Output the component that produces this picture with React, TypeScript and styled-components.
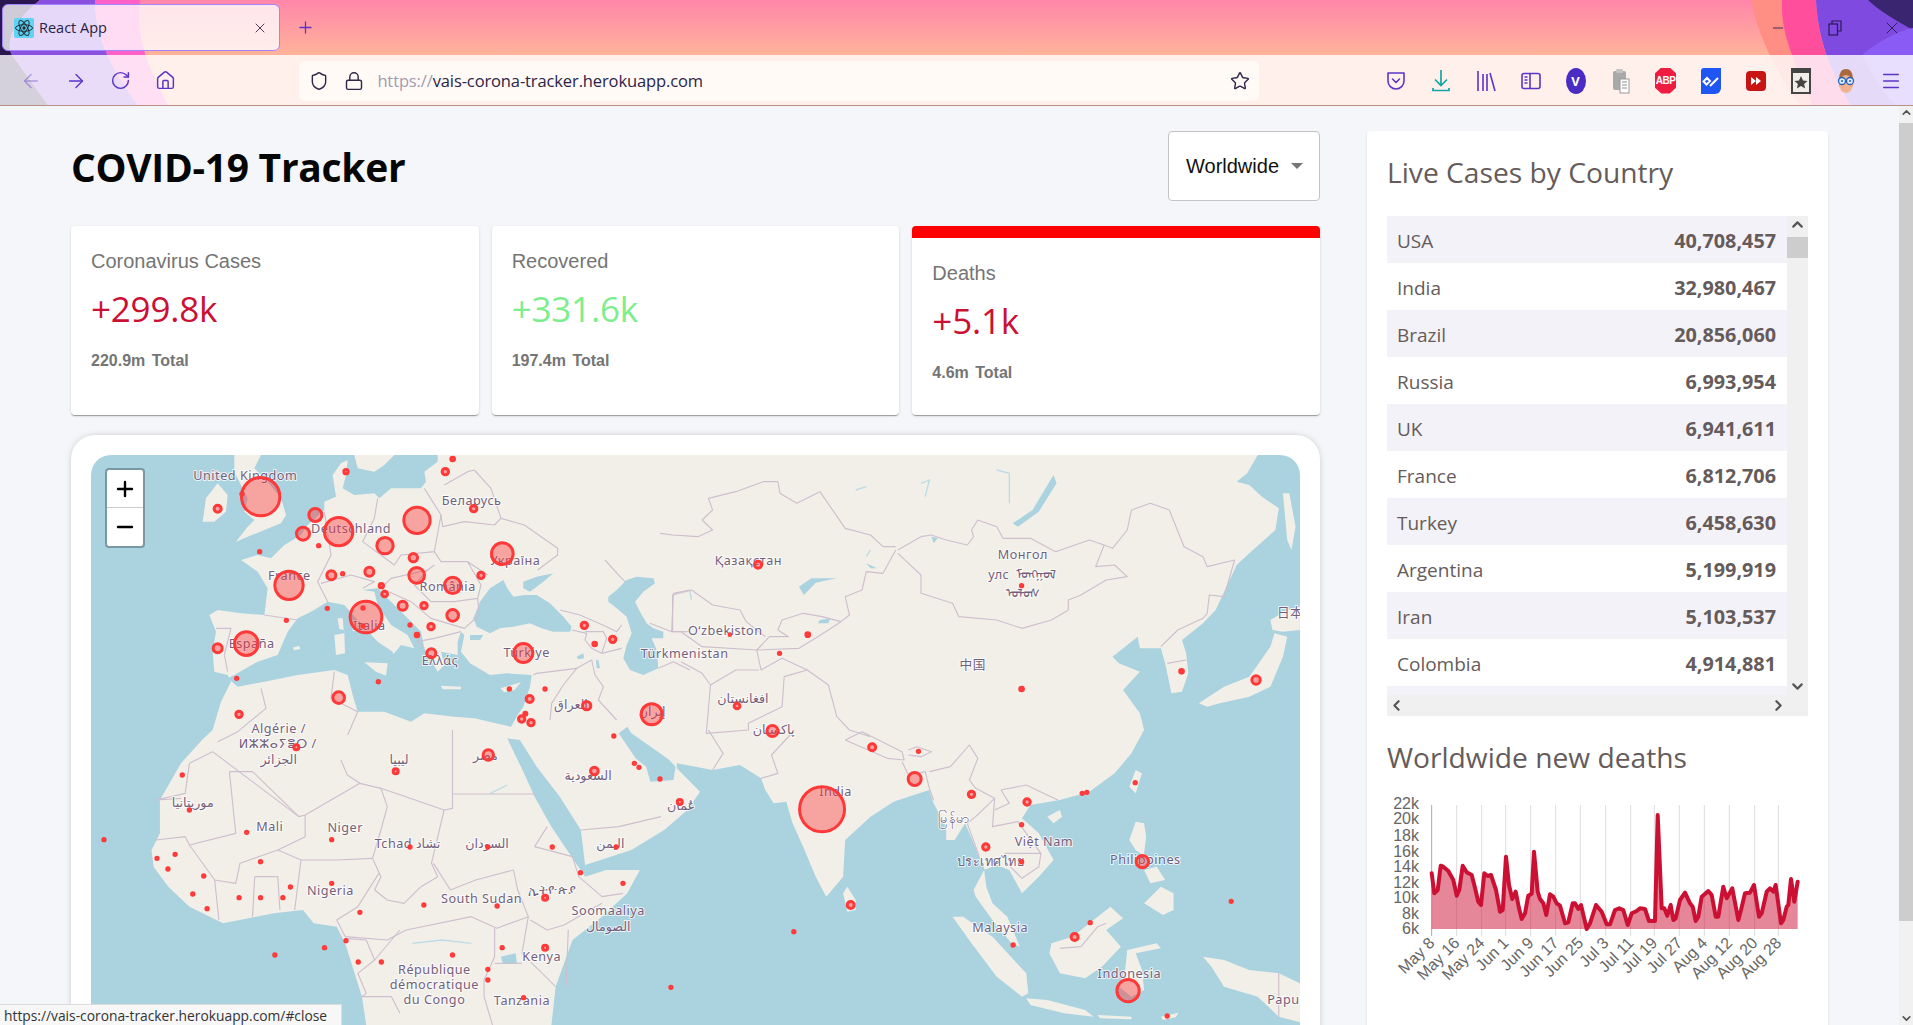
import React from "react";
import styled, { createGlobalStyle } from "styled-components";
import { ArrowLeft, ArrowRight, RotateCw, Home, Shield, Lock, Star, X, Plus, Minus, ChevronUp, ChevronDown, ChevronLeft, ChevronRight, Menu } from "lucide-react";

const Global = createGlobalStyle`
  html, body { margin: 0; padding: 0; height: 100%; overflow: hidden; background: #f5f6fa; }
  #root { height: 100%; }
  * { box-sizing: border-box; }
`;

const App_ = styled.div`
  position: relative;
  height: 100vh;
  display: flex;
  flex-direction: column;
  overflow: hidden;
  font-family: "Open Sans", "Liberation Sans", sans-serif;
`;

/* ---------- browser chrome ---------- */
const Chrome = styled.header`
  position: relative;
  flex: none;
  height: 106px;
  background: linear-gradient(#ff86aa 0, #ffb39a 55px, #ffb39a 100%);
`;
const Backdrop = styled.svg`
  position: absolute;
  inset: 0;
  width: 100%;
  height: 105px;
`;
const TabStrip = styled.div`
  position: relative;
  height: 55px;
  display: flex;
  align-items: center;
  padding-left: 2px;
`;
const Tab = styled.div`
  width: 278px;
  height: 47px;
  display: flex;
  align-items: center;
  padding: 0 11px;
  gap: 5px;
  border: 1px solid #a184ff;
  border-radius: 6px;
  background: rgba(255, 255, 255, 0.78);
  color: #2a2145;
  font-size: 14.5px;
`;
const TabTitle = styled.span`
  flex: 1;
`;
const NewTab = styled.div`
  margin-left: 16px;
  display: flex;
  color: #5b35c9;
`;
const WindowControls = styled.div`
  margin-left: auto;
  margin-right: -7px;
  display: flex;
  align-items: center;
  color: #2a1a55;
`;
const WinButton = styled.div`
  width: 57px;
  display: flex;
  justify-content: center;
`;
const Toolbar = styled.div`
  position: relative;
  height: 51px;
  display: flex;
  align-items: center;
  padding: 1px 0 0 9px;
  background: rgba(255, 255, 255, 0.8);
  border-bottom: 1px solid #b98f88;
`;
const NavButton = styled.div<{ $dim?: boolean }>`
  width: 44.6px;
  display: flex;
  justify-content: center;
  color: #5b35c9;
  opacity: ${(p) => (p.$dim ? 0.4 : 1)};
`;
const UrlBar = styled.div`
  margin-left: 112px;
  width: 960px;
  height: 40px;
  display: flex;
  align-items: center;
  padding: 0 9px 0 10px;
  gap: 15px;
  background: #fffaf6;
  border-radius: 6px;
  color: #2d2748;
`;
const UrlText = styled.div`
  flex: 1;
  margin-left: -2px;
  font-size: 16.5px;
  color: #2b2446;
  letter-spacing: -0.12px;
`;
const UrlScheme = styled.span`
  color: #a39cae;
`;
const ExtGroup = styled.div`
  margin-left: auto;
  display: flex;
  align-items: center;
`;
const ExtSlot = styled.div`
  width: 45px;
  height: 30px;
  display: flex;
  align-items: center;
  justify-content: center;
`;

/* ---------- page ---------- */
const Page = styled.main`
  flex: 1;
  min-height: 0;
  display: flex;
  background: #f5f6fa;
  overflow: hidden;
`;
const Content = styled.div`
  flex: 1;
  display: flex;
  align-items: flex-start;
  gap: 47px;
  padding: 25px 0 0 71px;
`;
const MainColumn = styled.div`
  width: 1249px;
  flex: none;
`;
const Header = styled.div`
  height: 70px;
  display: flex;
  align-items: center;
  justify-content: space-between;
  margin-bottom: 25px;
`;
const Title = styled.h1`
  margin: 1px 0 0;
  font-size: 39px;
  font-weight: 700;
  color: #060606;
  letter-spacing: -0.3px;
`;
const CountrySelect = styled.div`
  width: 152px;
  height: 70px;
  display: flex;
  align-items: center;
  padding-left: 17px;
  gap: 12px;
  background: #fff;
  border: 1px solid #c4c4c4;
  border-radius: 4px;
  font-family: "Liberation Sans", Arial, sans-serif;
  font-size: 20px;
  color: #111;
`;
const Caret = styled.span`
  width: 0;
  height: 0;
  border-left: 6px solid transparent;
  border-right: 6px solid transparent;
  border-top: 6px solid #757575;
`;
const StatsRow = styled.div`
  display: flex;
  gap: 13px;
  margin-bottom: 20px;
`;
const StatCard = styled.section<{ $active?: boolean }>`
  flex: 1;
  height: 189px;
  padding: 23px 20px 0;
  background: #fff;
  border-radius: 4px;
  border-top: ${(p) => (p.$active ? "12px solid #ff0000" : "0 solid transparent")};
  box-shadow: 0 2px 1px -1px rgba(0, 0, 0, 0.2), 0 1px 1px 0 rgba(0, 0, 0, 0.14), 0 1px 3px 0 rgba(0, 0, 0, 0.12);
`;
const StatTitle = styled.div`
  font-family: "Liberation Sans", Arial, sans-serif;
  font-size: 20px;
  line-height: 24px;
  color: #757575;
`;
const StatValue = styled.div<{ $green?: boolean }>`
  margin-top: 14px;
  font-size: 35px;
  font-weight: 500;
  line-height: 44px;
  color: ${(p) => (p.$green ? "#7dee8e" : "#cc1034")};
  letter-spacing: -0.2px;
`;
const StatTotal = styled.div`
  margin-top: 19px;
  font-family: "Liberation Sans", Arial, sans-serif;
  font-size: 16px;
  line-height: 22px;
  font-weight: 700;
  word-spacing: 2px;
  color: #757575;
`;
const MapCard = styled.section`
  padding: 20px;
  height: 640px;
  background: #fff;
  border-radius: 24px;
  box-shadow: 0 0 8px -4px rgba(0, 0, 0, 0.5);
`;
const MapFrame = styled.div`
  position: relative;
  height: 600px;
  border-radius: 20px;
  overflow: hidden;
  background: #aad3df;
`;
const MapSvg = styled.svg`
  display: block;
  width: 1209px;
  height: 600px;
`;
const Land = styled.polygon`
  fill: #f2efe9;
`;
const Water = styled.polygon`
  fill: #aad3df;
`;
const River = styled.polyline`
  fill: none;
  stroke: #bcdce5;
  stroke-width: 4;
`;
const Border = styled.polyline`
  fill: none;
  stroke: #cdbfcd;
  stroke-width: 3.4;
  stroke-linejoin: round;
`;
const Marker = styled.circle`
  fill: rgba(255, 51, 51, 0.4);
  stroke: #ff3838;
  stroke-width: 9;
`;
const MapLabel = styled.text`
  font-family: "Noto Sans", "DejaVu Sans", "Noto Sans CJK SC", sans-serif;
  font-size: 38px;
  letter-spacing: 1.5px;
  fill: #735f7c;
  stroke: rgba(255, 255, 255, 0.75);
  stroke-width: 6px;
  paint-order: stroke;
  text-anchor: middle;
`;
const ZoomControl = styled.div`
  position: absolute;
  left: 14px;
  top: 13px;
  width: 40px;
  border: 2px solid rgba(0, 0, 0, 0.28);
  border-radius: 4px;
  background: #fff;
  background-clip: padding-box;
  color: #000;
`;
const ZoomButton = styled.div<{ $top?: boolean }>`
  height: 38px;
  display: flex;
  align-items: center;
  justify-content: center;
  border-bottom: ${(p) => (p.$top ? "1px solid #ccc" : "0")};
`;

/* ---------- right panel ---------- */
const Sidebar = styled.aside`
  width: 461px;
  flex: none;
  min-height: 1000px;
  padding: 20px;
  background: #fff;
  border-radius: 4px;
  box-shadow: 0 1px 2px rgba(0, 0, 0, 0.15);
`;
const PanelTitle = styled.h3`
  margin: -1px 0 0;
  font-size: 28.2px;
  line-height: 44px;
  font-weight: 400;
  color: #655b5b;
`;
const TableBox = styled.div`
  margin-top: 22px;
  display: grid;
  grid-template-columns: 400px 21px;
  grid-template-rows: 479px 21px;
`;
const Rows = styled.div`
  overflow: hidden;
  color: #655b5b;
`;
const Row = styled.div<{ $odd: boolean; $sliver?: boolean }>`
  height: ${(p) => (p.$sliver ? "9px" : "47px")};
  display: flex;
  align-items: center;
  justify-content: space-between;
  padding: 2px 11px 0 10px;
  font-size: 19px;
  background: ${(p) => (p.$odd ? "#f3f2f8" : "#fff")};
`;
const RowValue = styled.strong`
  font-size: 19.8px;
  font-weight: 700;
`;
const VScroll = styled.div`
  display: flex;
  flex-direction: column;
  align-items: center;
  justify-content: space-between;
  background: #f0f0f0;
  color: #555;
  position: relative;
`;
const VThumb = styled.div`
  position: absolute;
  top: 21px;
  left: 0;
  width: 21px;
  height: 21px;
  background: #cdcdcd;
`;
const HScroll = styled.div`
  grid-column: 1 / 3;
  display: flex;
  align-items: center;
  justify-content: space-between;
  padding: 0 21px 0 1px;
  background: #f0f0f0;
  color: #555;
`;
const SecondTitle = styled(PanelTitle)`
  margin-top: 19px;
`;
const ChartSvg = styled.svg`
  display: block;
  margin: 11px 0 0;
  width: 421px;
  height: 210px;
`;
const AxisText = styled.text`
  font-family: "Liberation Sans", Arial, sans-serif;
  font-size: 16px;
  fill: #666;
`;
const PageScrollbar = styled.div`
  position: relative;
  flex: none;
  width: 14px;
  background: #f1f1f1;
  color: #555;
  display: flex;
  flex-direction: column;
  align-items: center;
  justify-content: space-between;
`;
const PageThumb = styled.div`
  position: absolute;
  top: 17px;
  left: 0;
  width: 14px;
  height: 798px;
  background: #cdcdcd;
`;
const StatusBar = styled.div`
  position: absolute;
  left: 0;
  bottom: 0;
  width: 342px;
  height: 21px;
  padding: 0 4px;
  font-size: 13.8px;
  line-height: 22px;
  white-space: nowrap;
  overflow: hidden;
  color: #333;
  background: #f7f7f7;
  border-top: 1px solid #ddd;
  border-right: 1px solid #ddd;
`;

/* ---------- map geometry: traced at 3x the map's pixels ---------- */
type P = number[];
const tr = (sx: number, ox: number, oy: number) => (p: P) => {
  const out: number[] = [];
  for (let i = 0; i < p.length; i += 2) out.push(ox + p[i] * sx, oy + p[i + 1]);
  return out;
};
const A = tr(1, 0, 0);
const Z6 = tr(1.148, -33, -45);
const Z7 = tr(1.2628, 1707, -45);
const Z8 = tr(1.2628, -273, 825);
const Z9 = tr(1.2628, 1707, 825);
const Z12 = tr(1, 1137, 315);
const pts = (p: P) => {
  const s: string[] = [];
  for (let i = 0; i < p.length; i += 2) s.push(`${p[i].toFixed(1)},${p[i + 1].toFixed(1)}`);
  return s.join(" ");
};

const outerLand = [
  ...A([1040, 0]),
  ...Z7([1420, 45, 1395, 100, 1370, 125, 1400, 135, 1430, 170, 1470, 205, 1462, 270, 1400, 340, 1370, 375, 1320, 510, 1290, 550, 1240, 600, 1250, 640, 1255, 700, 1240, 755, 1215, 760, 1200, 670, 1190, 625, 1140, 625, 1135, 590, 1095, 630, 1075, 650, 1090, 670, 1140, 695, 1100, 750, 1140, 820, 1150, 870]),
  ...Z9([1120, 70, 1080, 130, 1020, 185, 950, 210, 880, 225, 860, 265, 900, 310, 935, 390, 900, 440, 860, 490, 830, 420, 800, 405, 770, 420, 775, 470, 790, 520, 825, 560, 855, 650, 835, 640, 790, 570, 750, 500, 745, 480, 770, 420, 745, 340, 725, 280, 700, 330, 680, 330, 680, 290, 650, 220, 640, 180, 590, 200, 555, 215, 500, 260, 440, 330, 435, 440, 395, 500, 370, 440, 340, 350, 315, 280, 300, 215, 270, 220, 250, 180, 240, 145, 190, 105, 125, 120, 40, 100, 40, 115, 95, 185, 65, 240, 10, 300]),
  ...Z8([1500, 360, 1390, 405, 1390, 440, 1440, 420, 1520, 420, 1490, 490, 1430, 560, 1360, 630, 1320, 770, 1310, 885, 1310, 1000, 870, 1000, 870, 885, 860, 800, 820, 640, 800, 590, 745, 580, 720, 540, 650, 550, 530, 580, 450, 530, 400, 470, 365, 410, 360, 360, 380, 310, 380, 210, 430, 100, 480, 30, 505, 0]),
  ...A([390, 740, 420, 680, 410, 660, 370, 650, 365, 590, 375, 530, 355, 480, 380, 465, 450, 475, 520, 480, 525, 440, 530, 400, 500, 350, 450, 315, 500, 300, 540, 310, 580, 270, 630, 240, 650, 210, 700, 165, 700, 140, 735, 125, 725, 60, 750, 25, 770, 15, 765, 60, 755, 100, 790, 120, 850, 115, 865, 130, 900, 100, 990, 100, 1005, 80, 1000, 50, 1040, 20]),
];
const islands: number[][] = [
  A([430, 0, 510, 0, 490, 40, 530, 80, 570, 130, 585, 180, 570, 205, 520, 225, 470, 245, 435, 260, 470, 215, 490, 195, 460, 170, 470, 130, 450, 90, 430, 50]),
  A([335, 200, 345, 130, 380, 85, 410, 120, 405, 170, 370, 200]),
  A([790, 0, 800, 40, 850, 50, 880, 30, 910, 0]),
  Z7([1450, 540, 1490, 510, 1520, 500, 1520, 570, 1480, 575, 1455, 570]),
  Z7([1280, 790, 1340, 740, 1400, 710, 1450, 620, 1460, 580, 1490, 590, 1480, 650, 1450, 740, 1400, 770, 1330, 790, 1300, 800]),
  Z7([1480, 160, 1495, 160, 1510, 260, 1500, 330, 1490, 300]),
  Z9([1115, 170, 1130, 120, 1145, 130, 1130, 190]),
  Z9([920, 260, 950, 240, 955, 260, 935, 280]),
  Z9([1115, 330, 1130, 275, 1150, 280, 1155, 320, 1150, 370, 1175, 400, 1130, 360]),
  Z9([1150, 520, 1190, 470, 1220, 490, 1220, 540, 1195, 555]),
  Z9([1150, 420, 1180, 410, 1200, 450, 1165, 460]),
  Z9([930, 640, 980, 620, 1030, 570, 1070, 530, 1100, 565, 1060, 600, 1095, 650, 1050, 710, 1010, 745, 950, 730, 925, 670]),
  Z9([695, 560, 720, 560, 790, 620, 870, 730, 875, 790, 860, 800, 800, 740, 740, 640]),
  Z9([870, 805, 920, 810, 1010, 840, 1030, 860, 960, 850, 880, 825]),
  Z9([1110, 660, 1180, 640, 1190, 655, 1130, 670, 1145, 720, 1150, 780, 1120, 800, 1090, 770, 1105, 720]),
  Z9([1290, 680, 1340, 690, 1400, 720, 1470, 730, 1520, 760, 1530, 880, 1470, 860, 1420, 800, 1340, 770, 1310, 710]),
  Z9([435, 490, 445, 470, 465, 510, 465, 540, 445, 545]),
  Z9([1040, 855, 1120, 860, 1120, 868, 1045, 865]),
  Z9([1190, 860, 1232, 848, 1225, 862, 1195, 870]),
];
const waters: number[][] = [
  // Mediterranean
  A([410, 670, 430, 660, 500, 620, 560, 600, 590, 530, 620, 490, 660, 470, 710, 440, 760, 450, 800, 495, 860, 560, 905, 590, 915, 620, 895, 640, 905, 600, 930, 570, 970, 580, 950, 540, 900, 510, 860, 450, 850, 410, 815, 405, 860, 400, 900, 440, 950, 490, 990, 530, 1000, 580, 1040, 650, 1030, 660, 1060, 630, 1050, 590, 1100, 600, 1100, 560, 1110, 530, 1120, 540, 1110, 590, 1137, 625, 1197, 660, 1247, 655, 1322, 660, 1317, 695, 1297, 755, 1280, 780, 1260, 815, 1150, 790, 1090, 785, 1000, 775, 960, 800, 880, 770, 800, 770, 785, 720, 770, 660, 730, 645, 620, 660, 520, 680, 440, 695]),
  // Black Sea, Azov
  Z12([10, 175, 30, 125, 60, 85, 100, 60, 112, 85, 130, 110, 165, 105, 200, 105, 240, 130, 280, 170, 305, 200, 300, 215, 250, 215, 215, 205, 180, 190, 130, 200, 90, 205, 60, 220, 20, 200]),
  Z12([160, 65, 200, 50, 250, 40, 220, 65, 180, 95, 160, 85]),
  // Caspian
  Z12([415, 110, 440, 90, 470, 60, 500, 50, 550, 55, 555, 70, 520, 95, 495, 125, 510, 155, 530, 190, 550, 205, 580, 215, 580, 235, 545, 235, 560, 270, 565, 325, 520, 345, 480, 330, 460, 295, 470, 255, 485, 220, 470, 170, 440, 145, 415, 125]),
  // Red Sea, Gulf
  Z8([1205, 25, 1245, 130, 1270, 200, 1310, 290, 1355, 375, 1390, 440, 1390, 405, 1380, 300, 1330, 200, 1275, 110, 1235, 30]),
  Z8([1470, 10, 1510, 85, 1535, 110, 1545, 155, 1600, 150, 1605, 110, 1590, 90, 1568, 70, 1500, 10, 1490, -10]),
  // lakes
  Z7([935, 105, 942, 130, 900, 215, 850, 260, 838, 250, 885, 210]),
  Z7([330, 440, 360, 415, 420, 415, 370, 428, 342, 465]),
  Z7([490, 370, 515, 385, 500, 385]),
  Z7([380, 540, 405, 535, 400, 550, 375, 550]),
  Z7([645, 290, 660, 295, 650, 310]),
  Z8([1190, 680, 1225, 670, 1228, 700, 1195, 702]),
  Z12([320, 290, 340, 280, 342, 295, 325, 298]),
  Z12([378, 300, 385, 300, 390, 325, 380, 325]),
  Z12([0, 225, 40, 225, 30, 240, 0, 240]),
];
const moreLand: number[][] = [
  A([740, 490, 755, 490, 758, 525, 745, 522]),
  A([730, 540, 760, 535, 762, 595, 735, 600]),
  A([820, 622, 890, 625, 885, 662, 855, 650]),
  A([1050, 692, 1110, 695, 1110, 703, 1055, 703]),
  A([1228, 700, 1290, 682, 1270, 705, 1240, 712]),
  A([605, 578, 625, 572, 628, 582, 610, 586]),
];
const rivers: number[][] = [
  Z7([800, 90, 830, 100, 830, 190]),
  Z7([620, 130, 640, 120, 630, 170]),
  Z7([465, 150, 490, 140]),
  Z7([70, 450, 75, 480]),
  Z7([500, 330, 490, 350]),
  Z8([1165, 190, 1205, 165]),
  Z8([980, 640, 1050, 630, 1120, 640]),
];
const borders: number[][] = [
  Z7([0, 280, 30, 285, 90, 290, 125, 270, 100, 240, 125, 210, 115, 175, 180, 155, 245, 125, 280, 125, 285, 160, 325, 190, 380, 155, 440, 265, 500, 285, 530, 320, 560, 320]),
  Z7([560, 330, 530, 400, 490, 395, 480, 450, 440, 470, 450, 525, 430, 545, 385, 530, 340, 520, 290, 540, 280, 570, 305, 590, 260, 590, 230, 630, 330, 625, 375, 590, 430, 545]),
  Z7([230, 630, 240, 690, 290, 655, 350, 690, 400, 735, 420, 830, 450, 870, 500, 890]),
  Z7([30, 575, 30, 465, 75, 450, 125, 495, 190, 510, 205, 545, 250, 590]),
  Z7([30, 575, 50, 575, 100, 620, 230, 630]),
  Z7([50, 665, 100, 700, 120, 735, 180, 690, 235, 690]),
  Z7([120, 735, 110, 880, 210, 870, 210, 850, 290, 800, 295, 710, 350, 690]),
  Z7([565, 330, 620, 290, 645, 285, 680, 300, 730, 315, 745, 290, 740, 270, 755, 240, 800, 260, 815, 295, 880, 295, 940, 335, 1020, 300, 1055, 315, 1035, 380, 1080, 375, 1110, 410, 1060, 420, 1000, 465, 970, 480, 970, 510, 930, 540, 860, 565, 800, 540, 710, 530, 695, 490, 620, 460, 620, 405, 565, 340]),
  Z7([1055, 315, 1075, 325, 1110, 270, 1120, 210, 1165, 190, 1210, 210, 1245, 320, 1290, 350, 1300, 380, 1365, 360, 1340, 470, 1305, 465, 1300, 520, 1290, 535, 1230, 570, 1190, 620]),
  Z7([1205, 670, 1250, 660]),
  Z9([440, 30, 480, 5, 575, 65, 580, 90, 540, 85, 440, 30]),
  Z9([590, 60, 610, 50, 645, 65, 620, 80, 590, 75]),
  Z9([575, 95, 590, 135, 630, 125, 640, 175, 650, 210]),
  Z9([640, 125, 690, 110, 735, 45, 755, 85, 735, 150, 750, 175, 795, 205, 750, 260, 730, 280, 770, 420]),
  Z9([795, 205, 790, 290, 850, 275, 905, 370, 900, 410, 860, 445, 820, 395, 820, 370, 905, 370]),
  Z9([810, 180, 870, 165, 945, 210]),
  Z9([810, 180, 830, 220, 795, 240]),
  Z9([320, 0, 265, 75, 280, 130, 240, 145]),
  Z9([125, 120, 150, 70, 115, 0]),
  Z9([950, 655, 1000, 650, 1040, 590, 1060, 580]),
  Z9([1470, 730, 1470, 860]),
  A([700, 170, 720, 300, 680, 380, 710, 440]),
  A([690, 385, 780, 360, 850, 380, 815, 400]),
  A([860, 130, 850, 190, 815, 260, 910, 330, 930, 300, 1030, 290, 1050, 180, 1000, 100]),
  A([520, 480, 620, 495]),
  A([375, 520, 420, 520, 400, 600, 410, 650]),
  A([1050, 180, 1055, 215, 1120, 200, 1210, 210, 1230, 190, 1200, 100, 1150, 45, 1130, 50, 1060, 90]),
  A([1230, 190, 1300, 210, 1400, 280, 1400, 300, 1340, 345]),
  A([1030, 290, 1050, 320, 1130, 320, 1190, 360]),
  A([1010, 345, 1030, 330]),
  A([1130, 320, 1170, 390, 1160, 430, 1090, 440, 1020, 440, 970, 390, 1010, 345, 900, 370, 870, 400, 960, 440, 1020, 490, 1120, 520, 1165, 480, 1160, 430]),
  A([980, 560, 1030, 550, 1110, 530]),
  A([960, 500, 980, 560, 1000, 580]),
  Z12([270, 150, 330, 165, 410, 200, 440, 215, 455, 195]),
  Z12([305, 210, 350, 220, 345, 240, 365, 265, 395, 280, 455, 265]),
  Z12([345, 215, 400, 215, 410, 235, 395, 280]),
  Z12([190, 345, 200, 340, 320, 325, 280, 375, 245, 430, 240, 480]),
  Z12([320, 325, 365, 300, 375, 345, 400, 380, 385, 420, 440, 480]),
  Z12([610, 100, 605, 215, 540, 190]),
  Z12([605, 215, 660, 215]),
  Z12([610, 100, 660, 90]),
  Z12([565, 325, 610, 305, 660, 330]),
  Z12([405, 0, 450, 50, 465, 65]),
  A([510, 700, 525, 760, 440, 830, 380, 860]),
  A([730, 650, 720, 730, 800, 770, 770, 840]),
  Z8([505, 65, 450, 100, 440, 190, 370, 210, 430, 205]),
  Z8([505, 65, 710, 260, 725, 255, 855, 160, 905, 175, 1055, 240, 1075, 235, 1075, 0]),
  Z8([810, 90, 825, 135, 855, 160]),
  Z8([905, 175, 920, 230, 905, 300, 885, 385, 905, 440, 890, 480, 920, 510, 960, 520, 1000, 470, 1040, 440, 1025, 400, 1055, 240]),
  Z8([1075, 192, 1275, 192]),
  Z8([545, 125, 600, 125, 710, 260]),
  Z8([545, 125, 560, 310, 450, 345, 440, 320, 370, 330]),
  Z8([725, 255, 725, 320, 660, 360, 570, 400, 560, 460, 510, 450]),
  Z8([715, 390, 800, 390, 885, 385]),
  Z8([700, 540, 715, 390, 660, 360]),
  Z8([605, 440, 660, 440, 665, 540]),
  Z8([605, 440, 600, 560]),
  Z8([520, 570, 510, 450, 450, 345]),
  Z8([900, 430, 850, 530, 800, 570, 820, 620, 920, 630, 965, 600, 1120, 560, 1180, 595, 1255, 560]),
  Z8([1030, 400, 1070, 480, 1130, 450, 1220, 420, 1230, 480, 1255, 560, 1240, 670, 1320, 770]),
  Z8([1270, 350, 1360, 380, 1375, 440, 1430, 500, 1480, 490]),
  Z8([1270, 350, 1300, 290]),
  Z8([1260, 570, 1300, 600, 1340, 585, 1430, 520]),
  Z8([1350, 600, 1345, 770]),
  Z8([1175, 595, 1175, 680, 1150, 750, 1150, 800, 1170, 885]),
  Z8([1175, 700, 1240, 700]),
  Z8([820, 625, 870, 630, 890, 690, 850, 730, 870, 790, 860, 800, 930, 800, 950, 850]),
  Z8([890, 690, 950, 600]),
  Z8([1380, 300, 1470, 290, 1570, 260]),
];

const markers: number[][] = [
  [509, 125, 62], [380, 161, 15], [673, 180, 24], [636, 236, 24], [743, 230, 47], [683, 272, 8], [506, 290, 8], [594, 391, 47], [721, 361, 18], [755, 356, 8], [835, 350, 18], [882, 272, 29], [978, 196, 44], [967, 308, 17], [977, 361, 28], [1234, 296, 37], [1170, 361, 14], [1085, 391, 29], [871, 392, 11], [881, 417, 13], [935, 452, 18], [999, 452, 14], [1085, 481, 22], [1020, 515, 14], [957, 510, 8], [978, 540, 10], [1021, 595, 18], [825, 486, 52], [816, 459, 8], [816, 513, 8], [466, 566, 40], [380, 580, 18], [437, 670, 8], [586, 496, 8], [709, 460, 8], [862, 680, 8], [765, 50, 11], [453, 117, 8], [1148, 161, 14], [1063, 50, 14], [1085, 12, 10], [743, 728, 22], [444, 778, 14], [1297, 594, 33], [1480, 511, 14], [1255, 702, 8], [1362, 702, 8], [1316, 732, 15], [1292, 792, 14], [1303, 776, 9], [1320, 803, 14], [1487, 752, 17],
  ...[[1345, 612, 10], [1392, 598, 14], [1494, 823, 36], [1395, 888, 8]].map(([x, y, r]) => { const [a, b] = Z6([x, y]); return [a, b, r]; }),
  ...[[233, 374, 15], [166, 584, 7], [351, 584, 10], [284, 640, 8], [183, 798, 13], [267, 873, 21], [859, 437, 8], [859, 747, 10], [1239, 694, 10], [1416, 720, 17]].map(([x, y, r]) => { const [a, b] = Z7([x, y]); return [a, b, r]; }),
  ...[[385, 238, 72], [47, 216, 12], [504, 52, 15], [614, 64, 8], [605, 147, 24], [740, 193, 14], [872, 216, 14], [859, 284, 8], [774, 351, 14], [859, 395, 8], [1003, 190, 8], [1014, 187, 8], [1129, 158, 8], [1146, 395, 23], [453, 525, 15], [318, 605, 8], [26, 772, 8], [1022, 578, 8], [985, 621, 15], [839, 645, 8], [1112, 782, 38], [1205, 858, 8], [1357, 514, 8], [0, 147, 8]].map(([x, y, r]) => { const [a, b] = Z9([x, y]); return [a, b, r]; }),
  ...[[704, 52, 12], [940, 124, 12], [1160, 75, 20], [1412, 123, 16], [1507, 100, 8], [1518, 112, 8], [450, 240, 8], [433, 135, 8], [586, 307, 8], [788, 329, 8], [974, 351, 8], [1159, 351, 8], [1312, 351, 8], [1464, 351, 8], [1379, 428, 8], [1480, 460, 8], [1295, 503, 12], [788, 460, 8], [619, 395, 8], [247, 329, 8], [416, 373, 8], [373, 385, 8], [399, 417, 8], [484, 438, 8], [458, 492, 8], [492, 536, 8], [568, 503, 8], [619, 503, 8], [672, 503, 8], [690, 471, 8], [855, 547, 8], [1007, 525, 8], [1181, 528, 8], [822, 632, 8], [771, 653, 8], [653, 675, 8], [851, 696, 8], [906, 696, 8], [1075, 675, 8], [1159, 718, 8], [1159, 750, 8], [1193, 653, 8], [1295, 653, 12], [1244, 803, 8]].map(([x, y, r]) => { const [a, b] = Z8([x, y]); return [a, b, r]; }),
];

const lab = (f: (p: P) => number[], list: [string, number, number][]) =>
  list.map(([t, x, y]) => { const [a, b] = f([x, y]); return { t, x: a, y: b + 13 }; });
const labels = [
  ...lab(A, [["United Kingdom", 463, 62], ["Deutschland", 780, 221], ["Беларусь", 1142, 136], ["Україна", 1272, 318], ["France", 595, 362], ["România", 1070, 395], ["Italia", 835, 512], ["España", 482, 567], ["Ελλάς", 1047, 617], ["Türkiye", 1307, 594], ["Algérie /", 563, 822], ["العراق", 1440, 750]]),
  ...lab(Z6, [["Türkmenistan", 1580, 640], ["إيران", 1495, 815]]),
  ...lab(Z7, [["Қазақстан", 210, 362], ["O‘zbekiston", 155, 572], ["Монгол", 862, 344], ["улс", 805, 405], ["ᠮᠣᠩᠭᠣᠯ", 893, 403], ["ᠤᠯᠤᠰ", 862, 460], ["中国", 743, 675], ["افغانستان", 197, 775], ["پاکستان", 270, 868], ["日本", 1497, 517]]),
  ...lab(Z8, [["ⵍⵣⵣⴰⵢⴻⵔ /", 660, 42], ["الجزائر", 662, 88], ["ليبيا", 948, 88], ["مصر", 1153, 78], ["السعودية", 1397, 138], ["موريتانيا", 458, 217], ["Mali", 641, 290], ["Niger", 820, 293], ["Tchad تشاد", 968, 340], ["السودان", 1157, 342], ["اليمن", 1450, 340], ["ኢትዮጵያ", 1312, 480], ["Nigeria", 785, 483], ["South Sudan", 1144, 507], ["Soomaaliya", 1445, 542], ["الصومال", 1445, 590], ["Kenya", 1287, 680], ["République", 1032, 720], ["démocratique", 1032, 765], ["du Congo", 1032, 810], ["Tanzania", 1240, 812]]),
  ...lab(Z9, [["India", 417, 185], ["عُمان", 50, 228], ["မြန်မာ", 700, 265], ["ประเทศไทย", 785, 395], ["Việt Nam", 912, 335], ["Philippines", 1153, 390], ["Malaysia", 808, 592], ["Indonesia", 1115, 730], ["Papua", 1490, 810]]),
];

/* ---------- chart ---------- */
const series = [20,235,28,295,38,285,47,212,55,215,70,228,85,255,95,302,103,285,113,212,125,232,140,240,148,270,160,320,168,330,178,235,188,243,198,240,213,285,225,350,233,345,243,185,252,270,262,312,272,290,282,340,290,372,300,355,310,302,320,296,327,170,338,290,345,312,355,325,364,360,375,298,385,305,395,325,405,332,420,385,430,382,443,325,450,325,460,342,468,330,485,402,495,385,513,330,530,350,545,388,555,388,570,345,583,340,595,345,608,390,620,355,635,348,645,340,660,342,672,378,690,378,698,60,710,340,718,340,727,362,737,330,745,375,752,370,765,315,780,293,795,325,803,335,812,378,820,365,830,305,850,288,860,300,872,365,880,365,895,275,905,310,922,280,940,375,948,345,960,295,975,293,987,270,1002,365,1010,355,1025,290,1035,280,1045,290,1052,270,1068,385,1075,375,1085,335,1090,330,1098,252,1108,320,1118,260];
const cx = (p: number) => 38 + p / 3;
const cy = (p: number) => 5 + p / 3;
const linePts = (() => {
  const s: string[] = [];
  for (let i = 0; i < series.length; i += 2) s.push(`${cx(series[i]).toFixed(1)},${cy(series[i + 1]).toFixed(1)}`);
  return s.join(" ");
})();
const baseY = cy(402);
const areaPts = `${cx(20)},${baseY} ${linePts} ${cx(1118)},${baseY}`;
const ticks: [string, number][] = [["May 8", 20], ["May 16", 95], ["May 24", 170], ["Jun 1", 242], ["Jun 9", 317], ["Jun 17", 392], ["Jun 25", 466], ["Jul 3", 542], ["Jul 11", 617], ["Jul 19", 688], ["Jul 27", 763], ["Aug 4", 838], ["Aug 12", 913], ["Aug 20", 989], ["Aug 28", 1060]];
const yTicks: [string, number][] = [["22k", 13], ["20k", 28], ["18k", 45], ["16k", 61], ["14k", 76], ["12k", 92], ["10k", 107], ["8k", 123], ["6k", 138]];

const rows: [string, string][] = [["USA", "40,708,457"], ["India", "32,980,467"], ["Brazil", "20,856,060"], ["Russia", "6,993,954"], ["UK", "6,941,611"], ["France", "6,812,706"], ["Turkey", "6,458,630"], ["Argentina", "5,199,919"], ["Iran", "5,103,537"], ["Colombia", "4,914,881"]];

/* ---------- toolbar drawings ---------- */
const PURPLE = "#5b35c9";
const ReactFavicon = () => (
  <svg width="20" height="20" viewBox="0 0 20 20">
    <rect width="20" height="20" rx="2" fill="#5fd3f3" />
    <g fill="none" stroke="#23303a" strokeWidth="1">
      <ellipse cx="10" cy="10" rx="8.5" ry="3.3" />
      <ellipse cx="10" cy="10" rx="8.5" ry="3.3" transform="rotate(60 10 10)" />
      <ellipse cx="10" cy="10" rx="8.5" ry="3.3" transform="rotate(120 10 10)" />
    </g>
    <circle cx="10" cy="10" r="1.7" fill="#23303a" />
  </svg>
);
const PocketIcon = () => (
  <svg width="20" height="22" viewBox="0 0 20 22" fill="none" stroke={PURPLE} strokeWidth="1.6" strokeLinecap="round" strokeLinejoin="round">
    <path d="M2 3h16v8a8 8 0 0 1-16 0z" />
    <path d="M6.5 9l3.5 3.5L13.500 9" />
  </svg>
);
const LibraryIcon = () => (
  <svg width="20" height="24" viewBox="0 0 20 24" fill="none" stroke={PURPLE} strokeWidth="1.6">
    <path d="M2 2v20M7 5v17M11 5v17M14 4l5 18" />
  </svg>
);
const SidebarIcon = () => (
  <svg width="20" height="18" viewBox="0 0 20 18" fill="none" stroke={PURPLE} strokeWidth="1.6">
    <rect x="1" y="1.500" width="18" height="15" rx="2" />
    <path d="M9 1.500v15M3.500 5h3M3.500 8h3M3.500 11h3" />
  </svg>
);
const DownloadGlyph = () => (
  <svg width="20" height="24" viewBox="0 0 20 24" fill="none" stroke="#12a5a8" strokeWidth="1.7">
    <path d="M10 1v15M4 10.500l6 6 6-6" />
    <path d="M2 19v2.500h16V19" />
  </svg>
);
const VBadge = styled.div`
  width: 20px;
  height: 26px;
  border-radius: 50%;
  background: #4a2bc4;
  color: #fff;
  font-size: 13px;
  font-weight: 700;
  display: flex;
  align-items: center;
  justify-content: center;
`;
const ClipIcon = () => (
  <svg width="18" height="26" viewBox="0 0 18 26">
    <rect x="1" y="3" width="13" height="19" rx="2" fill="#a9a9a9" />
    <rect x="4" y="1" width="7" height="4" rx="1" fill="#c4c4c4" />
    <rect x="8" y="11" width="9" height="14" fill="#fff" stroke="#9a9a9a" />
    <path d="M10 14h5M10 17h5M10 20h5" stroke="#8e8e8e" />
  </svg>
);
const AbpIcon = styled.div`
  width: 21px;
  height: 26px;
  background: #ed1c40;
  clip-path: polygon(30% 0, 70% 0, 100% 22%, 100% 78%, 70% 100%, 30% 100%, 0 78%, 0 22%);
  color: #fff;
  font-family: "Liberation Sans", Arial, sans-serif;
  font-size: 10px;
  font-weight: 700;
  letter-spacing: -0.5px;
  display: flex;
  align-items: center;
  justify-content: center;
`;
const ChainIcon = () => (
  <svg width="20" height="26" viewBox="0 0 20 26">
    <path d="M3 0h17v20a6 6 0 0 1-6 6H0V3a3 3 0 0 1 3-3z" fill="#1f55f2" />
    <path d="M2.500 13.500l3.500-3.500 3 3-3.500 3.500zM9 18l8-8" fill="none" stroke="#fff" strokeWidth="2" />
  </svg>
);
const FastForwardIcon = () => (
  <svg width="20" height="20" viewBox="0 0 20 20">
    <rect width="20" height="20" rx="4" fill="#c91414" />
    <path d="M5 6l5 4-5 4zM10 6l5 4-5 4z" fill="#fff" />
  </svg>
);
const FrameStarIcon = () => (
  <svg width="20" height="26" viewBox="0 0 20 26">
    <rect width="20" height="26" fill="#444" />
    <rect x="2" y="5" width="16" height="19" fill="#f2ede8" />
    <path d="M10 8l2 4.500 4.500.4-3.400 3 1 4.600L10 18l-4.100 2.500 1-4.600-3.400-3 4.500-.4z" fill="#444" />
  </svg>
);
const AvatarIcon = () => (
  <svg width="20" height="26" viewBox="0 0 20 26">
    <path d="M3 12C3 4 6 1 10 1s7 3 7 11v6H3z" fill="#a9693f" />
    <ellipse cx="10" cy="16" rx="7" ry="9" fill="#f1b38f" />
    <circle cx="6" cy="13" r="3.500" fill="#d7ecf7" stroke="#2a5fb8" strokeWidth="1.300" />
    <circle cx="14" cy="13" r="3.500" fill="#d7ecf7" stroke="#2a5fb8" strokeWidth="1.300" />
    <circle cx="6" cy="13" r="1" fill="#2a5fb8" />
    <circle cx="14" cy="13" r="1" fill="#2a5fb8" />
  </svg>
);
const RestoreIcon = () => (
  <svg width="14" height="16" viewBox="0 0 14 16" fill="none" stroke="currentColor" strokeWidth="1.200">
    <rect x="1" y="4" width="8.500" height="11" />
    <path d="M4 4V1h9v10h-3.500" />
  </svg>
);

export default function App() {
  return (
    <App_>
      <Global />
      <Chrome>
        <Backdrop viewBox="0 0 1913 105" preserveAspectRatio="none">
          <path d="M0 0H40C15 20 5 40 12 55L48 105H0Z" fill="#2a1650" />
          <path d="M40 0H95C95 30 105 60 138 105H48L12 55C5 40 15 20 40 0Z" fill="#8a50e0" />
          <path d="M95 0H140C135 40 150 70 168 105H138C105 60 95 30 95 0Z" fill="#ff60c8" />
          <path d="M1752 0H1782C1780 40 1800 70 1812 105H1800C1775 70 1755 30 1752 0Z" fill="#ff8f84" />
          <path d="M1782 0H1816C1818 40 1830 70 1850 105H1812C1800 70 1780 40 1782 0Z" fill="#ff4f9c" />
          <path d="M1816 0H1913V105H1850C1830 70 1818 40 1816 0Z" fill="#7f4ae0" />
          <path d="M1868 0H1913V30C1895 20 1878 10 1868 0Z" fill="#3a2570" />
          <path d="M1862 55C1880 40 1900 30 1913 28V105H1896C1880 90 1870 70 1862 55Z" fill="#8b5cf5" />
        </Backdrop>
        <TabStrip>
          <Tab>
            <ReactFavicon />
            <TabTitle>React App</TabTitle>
            <X size={16} strokeWidth={1.3} />
          </Tab>
          <NewTab><Plus size={19} strokeWidth={1.6} /></NewTab>
          <WindowControls>
            <WinButton><Minus size={16} strokeWidth={1.3} /></WinButton>
            <WinButton><RestoreIcon /></WinButton>
            <WinButton><X size={20} strokeWidth={1.1} /></WinButton>
          </WindowControls>
        </TabStrip>
        <Toolbar>
          <NavButton $dim><ArrowLeft size={22} strokeWidth={1.5} /></NavButton>
          <NavButton><ArrowRight size={22} strokeWidth={1.5} /></NavButton>
          <NavButton><RotateCw size={21} strokeWidth={1.7} /></NavButton>
          <NavButton><Home size={21} strokeWidth={1.7} /></NavButton>
          <UrlBar>
            <Shield size={20} strokeWidth={1.7} />
            <Lock size={20} strokeWidth={1.7} />
            <UrlText><UrlScheme>https://</UrlScheme>vais-corona-tracker.herokuapp.com</UrlText>
            <Star size={20} strokeWidth={1.7} />
          </UrlBar>
          <ExtGroup>
            <ExtSlot><PocketIcon /></ExtSlot>
            <ExtSlot><DownloadGlyph /></ExtSlot>
            <ExtSlot><LibraryIcon /></ExtSlot>
            <ExtSlot><SidebarIcon /></ExtSlot>
            <ExtSlot><VBadge>V</VBadge></ExtSlot>
            <ExtSlot><ClipIcon /></ExtSlot>
            <ExtSlot><AbpIcon>ABP</AbpIcon></ExtSlot>
            <ExtSlot><ChainIcon /></ExtSlot>
            <ExtSlot><FastForwardIcon /></ExtSlot>
            <ExtSlot><FrameStarIcon /></ExtSlot>
            <ExtSlot><AvatarIcon /></ExtSlot>
            <ExtSlot><Menu size={22} color={PURPLE} strokeWidth={1.6} /></ExtSlot>
          </ExtGroup>
        </Toolbar>
      </Chrome>
      <Page>
        <Content>
          <MainColumn>
            <Header>
              <Title>COVID-19 Tracker</Title>
              <CountrySelect>Worldwide<Caret /></CountrySelect>
            </Header>
            <StatsRow>
              <StatCard>
                <StatTitle>Coronavirus Cases</StatTitle>
                <StatValue>+299.8k</StatValue>
                <StatTotal>220.9m Total</StatTotal>
              </StatCard>
              <StatCard>
                <StatTitle>Recovered</StatTitle>
                <StatValue $green>+331.6k</StatValue>
                <StatTotal>197.4m Total</StatTotal>
              </StatCard>
              <StatCard $active>
                <StatTitle>Deaths</StatTitle>
                <StatValue>+5.1k</StatValue>
                <StatTotal>4.6m Total</StatTotal>
              </StatCard>
            </StatsRow>
            <MapCard>
              <MapFrame>
                <MapSvg viewBox="0 0 3627 1800">
                  <Land points={pts(outerLand)} />
                  {islands.map((p, i) => <Land key={i} points={pts(p)} />)}
                  {waters.map((p, i) => <Water key={i} points={pts(p)} />)}
                  {moreLand.map((p, i) => <Land key={i} points={pts(p)} />)}
                  {rivers.map((p, i) => <River key={i} points={pts(p)} />)}
                  {borders.map((p, i) => <Border key={i} points={pts(p)} />)}
                  {labels.map((l) => <MapLabel key={l.t} x={l.x} y={l.y}>{l.t}</MapLabel>)}
                  {markers.map(([x, y, r], i) => <Marker key={i} cx={x} cy={y} r={Math.max(r - 4.5, 1)} />)}
                </MapSvg>
                <ZoomControl>
                  <ZoomButton $top><Plus size={24} strokeWidth={2.4} /></ZoomButton>
                  <ZoomButton><Minus size={24} strokeWidth={2.4} /></ZoomButton>
                </ZoomControl>
              </MapFrame>
            </MapCard>
          </MainColumn>
          <Sidebar>
            <PanelTitle>Live Cases by Country</PanelTitle>
            <TableBox>
              <Rows>
                {rows.map(([c, v], i) => (
                  <Row key={c} $odd={i % 2 === 0}>
                    <span>{c}</span>
                    <RowValue>{v}</RowValue>
                  </Row>
                ))}
                <Row $odd $sliver />
              </Rows>
              <VScroll>
                <VThumb />
                <ChevronUp size={17} strokeWidth={3} />
                <ChevronDown size={17} strokeWidth={3} />
              </VScroll>
              <HScroll>
                <ChevronLeft size={17} strokeWidth={3} />
                <ChevronRight size={17} strokeWidth={3} />
              </HScroll>
            </TableBox>
            <SecondTitle>Worldwide new deaths</SecondTitle>
            <ChartSvg viewBox="0 0 421 210">
              {ticks.map(([t, p], i) => (
                <line key={t} x1={cx(p)} x2={cx(p)} y1={15} y2={146} stroke={i === 0 ? "#aaa" : "#ddd"} strokeWidth={1} />
              ))}
              <polygon points={areaPts} fill="rgba(204,16,52,0.5)" />
              <polyline points={linePts} fill="none" stroke="#cc1034" strokeWidth={4} strokeLinejoin="round" strokeLinecap="round" />
              {yTicks.map(([t, y]) => <AxisText key={t} x={32} y={y + 5.500} textAnchor="end">{t}</AxisText>)}
              {ticks.map(([t, p]) => (
                <AxisText key={t} x={cx(p) + 4} y={154} textAnchor="end" transform={`rotate(-45 ${cx(p) + 4} 154)`}>{t}</AxisText>
              ))}
            </ChartSvg>
          </Sidebar>
        </Content>
        <PageScrollbar>
          <PageThumb />
          <ChevronUp size={13} strokeWidth={3} />
          <ChevronDown size={13} strokeWidth={3} />
        </PageScrollbar>
      </Page>
      <StatusBar>https://vais-corona-tracker.herokuapp.com/#close</StatusBar>
    </App_>
  );
}
